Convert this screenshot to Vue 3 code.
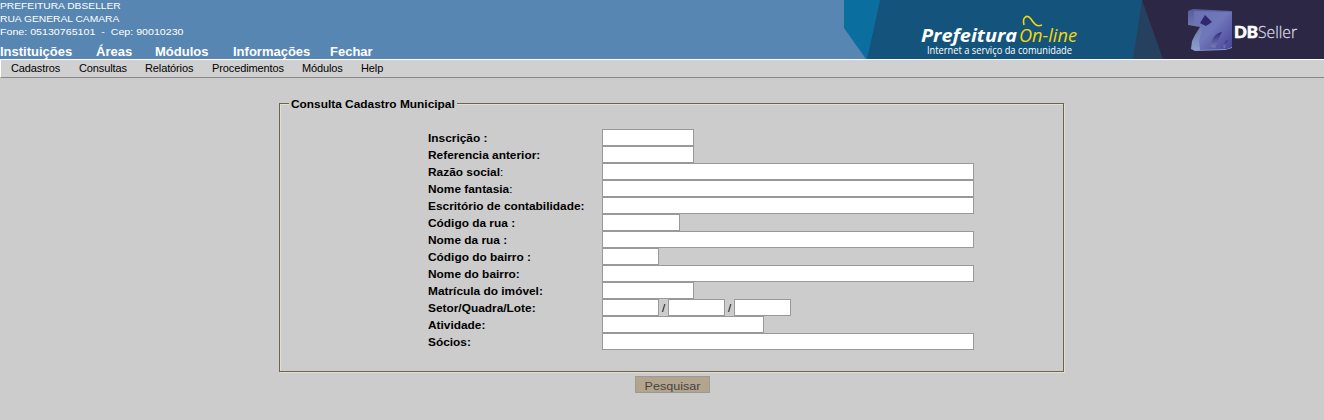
<script setup>
const modules = ['Instituições', 'Áreas', 'Módulos', 'Informações', 'Fechar']
const menu = ['Cadastros', 'Consultas', 'Relatórios', 'Procedimentos', 'Módulos', 'Help']
const rows = [
  { label: 'Inscrição :', fields: [92] },
  { label: 'Referencia anterior:', fields: [92] },
  { label: 'Razão social', tail: ':', fields: [372] },
  { label: 'Nome fantasia', tail: ':', fields: [372] },
  { label: 'Escritório de contabilidade:', fields: [372] },
  { label: 'Código da rua :', fields: [78] },
  { label: 'Nome da rua :', fields: [372] },
  { label: 'Código do bairro :', fields: [57] },
  { label: 'Nome do bairro:', fields: [372] },
  { label: 'Matrícula do imóvel:', fields: [92] },
  { label: 'Setor/Quadra/Lote:', fields: [57, 57, 57] },
  { label: 'Atividade:', fields: [162] },
  { label: 'Sócios:', fields: [372] },
]
</script>

<template>
  <div class="page">
    <header class="top">
      <div class="left">
        <div class="info">
          <div>PREFEITURA DBSELLER</div>
          <div>RUA GENERAL CAMARA</div>
          <div class="phone">Fone: 05130765101 &nbsp;-&nbsp; Cep: 90010230</div>
        </div>
        <nav class="modules">
          <a v-for="(m, i) in modules" :key="m" :class="'mod' + i">{{ m }}</a>
        </nav>
      </div>
      <svg class="banner" width="480" height="59" viewBox="0 0 480 59">
        <defs>
          <linearGradient id="face" x1="0" y1="0" x2="1" y2=".9">
            <stop offset="0" stop-color="#6a72b4" />
            <stop offset=".5" stop-color="#7077ba" />
            <stop offset="1" stop-color="#4a479b" />
          </linearGradient>
          <linearGradient id="side" x1="0" y1="0" x2="0" y2="1">
            <stop offset="0" stop-color="#565b9c" />
            <stop offset="1" stop-color="#8e9fce" />
          </linearGradient>
          <linearGradient id="swoop" x1="0" y1="0" x2="0" y2="1">
            <stop offset="0" stop-color="#2f2b7c" />
            <stop offset="1" stop-color="#7b7bb8" />
          </linearGradient>
        </defs>
        <path d="M0 0H60V59H22L0 28Z" fill="#0a6f9f" />
        <path d="M36 0H310V59H23Z" fill="#14547c" />
        <path d="M298 0H310L330 59H289Z" fill="#25415f" />
        <path d="M298 0H480V59H319Z" fill="#2b2745" />
        <text class="brand" x="77" y="42" textLength="96" lengthAdjust="spacingAndGlyphs">Prefeitura</text>
        <text class="online" x="175" y="42" textLength="58" lengthAdjust="spacingAndGlyphs">On-line</text>
        <path d="M180 25C178 17 183 14 187 19C191 25 193 27 198 25" fill="none" stroke="#f5d70a" stroke-width="1.6" />
        <text class="slogan" x="83" y="53.500" textLength="145" lengthAdjust="spacingAndGlyphs">Internet a serviço da comunidade</text>
        <path d="M344 11L349 9L388 11V48L381 50L351 51L347 49L348 41L351 35L356 27L344 25Z" fill="url(#side)" />
        <path d="M350 11L388 12V47L383 49L356 50L355 41L357 34L361 26L350 24Z" fill="url(#face)" />
        <path d="M361 15L368 22L362 26L356 23Z" fill="#30286f" />
        <path d="M367 47C367 38 372 33 378 32C375 37 374 42 371 48Z" fill="url(#swoop)" />
        <path d="M379 47C379 44 381 41 384 40C383 43 382 45 381 48Z" fill="url(#swoop)" />
        <text class="db" x="390" y="38" textLength="24" lengthAdjust="spacingAndGlyphs">DB</text>
        <text class="seller" x="414" y="38" textLength="39" lengthAdjust="spacingAndGlyphs">Seller</text>
      </svg>
    </header>
    <nav class="menu">
      <a v-for="(m, i) in menu" :key="m" :class="'item' + i">{{ m }}</a>
    </nav>
    <main>
      <form @submit.prevent>
        <fieldset>
          <legend><span>Consulta Cadastro Municipal</span></legend>
          <div class="rows">
            <div v-for="r in rows" :key="r.label" class="row">
              <label><span><b>{{ r.label }}</b>{{ r.tail }}</span></label>
              <template v-for="(w, i) in r.fields" :key="i">
                <span v-if="i" class="slash">/</span>
                <input type="text" :style="{ width: w + 'px' }" />
              </template>
            </div>
          </div>
        </fieldset>
        <button type="button"><span>Pesquisar</span></button>
      </form>
    </main>
  </div>
</template>

<style>
body { background: #ccc; }
</style>

<style scoped>
.page { width: 1324px; height: 420px; overflow: hidden; background: #ccc; font-family: "Liberation Sans", Arial, sans-serif; color: #000; }
.top { height: 59px; display: flex; justify-content: space-between; background: #5786b2; }
.left { color: #fff; white-space: nowrap; }
.info { font-size: 9px; line-height: 13px; height: 44px; box-sizing: border-box; }
.info div { width: 160px; transform: scaleX(1.139); transform-origin: 0 0; }
.info .phone { transform: scaleX(1.183); }
.modules { display: flex; font-weight: bold; font-size: 13px; line-height: 15px; }
.modules a { flex: none; }
.mod0 { width: 96px; }
.mod1 { width: 59px; }
.mod2 { width: 78px; }
.mod3 { width: 97px; }
.banner { display: block; flex: none; }
.brand { font: italic bold 18px "Open Sans", sans-serif; fill: #fff; }
.online { font: italic 19px "Open Sans", sans-serif; fill: #f5d70a; }
.slogan { font: 10px "Open Sans", sans-serif; fill: #fff; }
.db { font: 900 17px Lato, sans-serif; fill: #fff; stroke: #fff; stroke-width: .6px; }
.seller { font: 300 17px "Open Sans", sans-serif; fill: #d8d6e0; stroke: #d8d6e0; stroke-width: .3px; }
.menu { box-sizing: border-box; height: 19px; display: flex; padding-left: 10px; background: #d0d0d0; border-top: 1px solid #fff; border-left: 1px solid #fff; border-bottom: 1px solid #888; font-size: 11px; letter-spacing: -.12px; line-height: 17px; }
.item0 { width: 68px; }
.item1 { width: 66px; }
.item2 { width: 67px; }
.item3 { width: 90px; }
.item4 { width: 59px; }
main { display: flex; justify-content: center; padding: 20px 0 0 20px; }
form { width: 786px; display: flex; flex-direction: column; align-items: center; }
fieldset { align-self: flex-start; box-sizing: border-box; width: 785px; height: 274px; margin: 0; padding: 0 9px; border: 1px solid #6b6350; box-shadow: 1px 1px 0 #e6dfcc, inset 1px 1px 0 #e6dfcc; }
legend { box-sizing: border-box; width: 168px; padding: 0 2px; font-size: 11px; font-weight: bold; line-height: 12px; height: 11px; background: #ccc; white-space: nowrap; }
legend span, label span, button span { display: inline-block; transform: scaleX(1.08); transform-origin: 0 0; }
.rows { padding: 20px 0 0 139px; }
.row { display: flex; height: 17px; align-items: center; }
label { width: 174px; font-size: 11px; line-height: 17px; white-space: nowrap; padding-top: 1px; box-sizing: border-box; height: 17px; }
input { box-sizing: border-box; height: 17px; margin: 0; padding: 0; border: 1px solid #999; border-radius: 0; background: #fff; outline: none; }
.slash { width: 9px; text-align: center; font-size: 11.5px; }
button { box-sizing: border-box; width: 75px; height: 17px; margin: 4px 0 0 1px; padding: 2px 0 0; border: 1px solid #999; border-radius: 0; background: #b3a48d; color: #444; font: 11px "Liberation Sans", Arial, sans-serif; line-height: 14px; }
button span { transform: scaleX(1.14); transform-origin: 50% 0; }
</style>
